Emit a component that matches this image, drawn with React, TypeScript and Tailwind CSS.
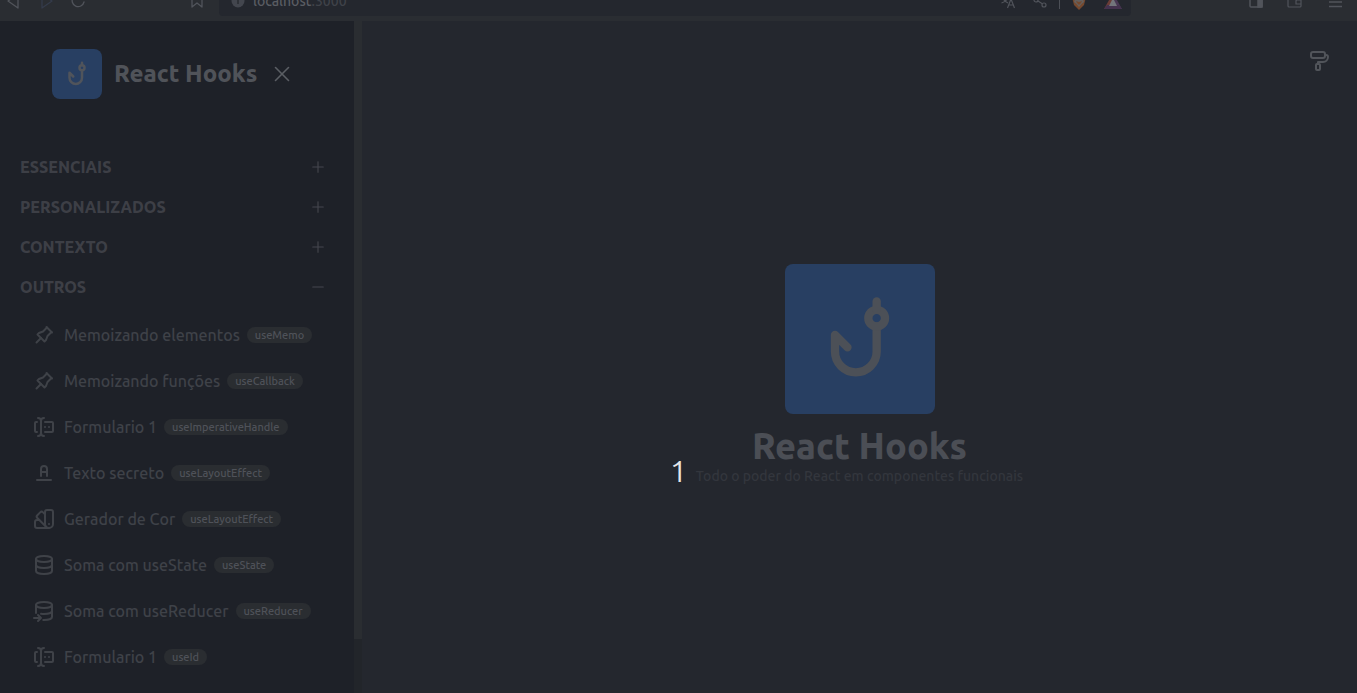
import type { ComponentType, ReactNode } from "react";
import {
  TbPin,
  TbForms,
  TbTextColor,
  TbColorSwatch,
  TbDatabase,
  TbPaint,
  TbFishHook,
} from "react-icons/tb";
import { X, Plus, Minus } from "lucide-react";

function DatabaseArrow({ size = 24 }: { size?: number | string }) {
  return (
    <svg
      width={size}
      height={size}
      viewBox="0 0 24 24"
      fill="none"
      stroke="currentColor"
      strokeWidth="2"
      strokeLinecap="round"
      strokeLinejoin="round"
    >
      <ellipse cx="12" cy="6" rx="8" ry="3" />
      <path d="M4 6v8m5.009.783c.924.14 1.933.217 2.991.217 4.418 0 8-1.343 8-3V6" />
      <path d="M11.252 20.987c.246.009.496.013.748.013 4.418 0 8-1.343 8-3v-6M2 19h7M6 16l3 3-3 3" />
    </svg>
  );
}

type Item = { label: string; tag: string; icon: ComponentType<{ size?: number | string }> };

const items: Item[] = [
  { label: "Memoizando elementos", tag: "useMemo", icon: TbPin },
  { label: "Memoizando funções", tag: "useCallback", icon: TbPin },
  { label: "Formulario 1", tag: "useImperativeHandle", icon: TbForms },
  { label: "Texto secreto", tag: "useLayoutEffect", icon: TbTextColor },
  { label: "Gerador de Cor", tag: "useLayoutEffect", icon: TbColorSwatch },
  { label: "Soma com useState", tag: "useState", icon: TbDatabase },
  { label: "Soma com useReducer", tag: "useReducer", icon: DatabaseArrow },
  { label: "Formulario 1", tag: "useId", icon: TbForms },
];

const closedSections = ["Essenciais", "Personalizados", "Contexto"];

function BarButton({ label, children }: { label: string; children: ReactNode }) {
  return (
    <button type="button" aria-label={label} className="flex size-5 items-center justify-center">
      {children}
    </button>
  );
}

function BrowserBar() {
  return (
    <header className="flex h-[21px] shrink-0 flex-col justify-end overflow-hidden bg-[#2a2d32] text-[#51545b]">
      <div className="flex h-10 shrink-0 items-center">
        <div className="flex w-[219px] shrink-0 items-center gap-3 pr-3 pl-1">
          <BarButton label="Voltar">
            <svg width="20" height="20" viewBox="0 0 20 20" fill="none" stroke="currentColor" strokeWidth="1.3" strokeLinejoin="round">
              <path d="M14 3v14L4 10z" />
            </svg>
          </BarButton>
          <BarButton label="Avançar">
            <svg width="20" height="20" viewBox="0 0 20 20" fill="none" stroke="#343b4b" strokeWidth="1.3" strokeLinejoin="round">
              <path d="M6 3v14l10-7z" />
            </svg>
          </BarButton>
          <BarButton label="Recarregar">
            <svg width="20" height="20" viewBox="0 0 20 20" fill="none" stroke="currentColor" strokeWidth="1.3" strokeLinecap="round">
              <path d="M14.5 5.5A6 6 0 1 0 16 11M16 2v5h-5" />
            </svg>
          </BarButton>
          <div className="flex-1" />
          <BarButton label="Favoritos">
            <svg width="20" height="20" viewBox="0 0 20 20" fill="none" stroke="currentColor" strokeWidth="1.3" strokeLinejoin="round">
              <path d="M5 3h10v13l-5-4-5 4z" />
            </svg>
          </BarButton>
        </div>
        <div className="flex h-[30px] min-w-0 flex-1 items-center rounded bg-[#24272e] pr-2 pl-3">
          <svg width="14" height="14" viewBox="0 0 14 14" className="mr-2 shrink-0">
            <circle cx="7" cy="7" r="6.5" fill="#43464e" />
            <path d="M7 6v4M7 3.5v1" stroke="#2a2d32" strokeWidth="1.5" />
          </svg>
          <span className="text-sm text-[#5a5d63]">
            localhost<span className="text-[#3f4249]">:3000</span>
          </span>
          <div className="flex-1" />
          <div className="flex items-center gap-3">
            <BarButton label="Traduzir">
              <svg width="20" height="20" viewBox="0 0 20 20" fill="none" stroke="currentColor" strokeWidth="1.2">
                <path d="M3 5h9M7.500 3v2M10.500 5c-1 4-4 6-7 7M5 7c1 3 3 4 5 5M9.500 17l3.500-9 3.500 9M10.800 14h4.400" />
              </svg>
            </BarButton>
            <BarButton label="Compartilhar">
              <svg width="20" height="20" viewBox="0 0 20 20" fill="none" stroke="currentColor" strokeWidth="1.2">
                <circle cx="6" cy="9" r="2" />
                <circle cx="14" cy="14" r="2" />
                <circle cx="14" cy="4" r="2" />
                <path d="M8 10l4.300 2.800M8 8l4.300-2.800" />
              </svg>
            </BarButton>
          </div>
          <div className="mx-[9px] h-4 w-px bg-[#4c4f56]" />
          <div className="flex items-center gap-[14px]">
            <BarButton label="Brave Shields">
              <svg width="16" height="20" viewBox="0 0 16 20">
                <path d="M3 2h10l2 4-2 8-5 5-5-5L1 6z" fill="#76492e" />
                <path d="M4 8h8l1 3-2.500 2L8 16l-2.500-3L3 11z" fill="#65605e" />
                <path d="M5 10l3 1 3-1-1 2-2 2-2-2z" fill="#76492e" />
              </svg>
            </BarButton>
            <BarButton label="Brave Rewards">
              <svg width="20" height="18" viewBox="0 0 20 18">
                <path d="M10 1L1 17h9z" fill="#6b3c36" />
                <path d="M10 1l9 16h-9z" fill="#493854" />
                <path d="M1 17l3-4h12l3 4z" fill="#44324e" />
                <path d="M10 6l-4 8h8z" fill="#73757b" />
              </svg>
            </BarButton>
          </div>
        </div>
        <div className="flex w-[226px] shrink-0 items-center justify-end gap-5 pr-[11px]">
          <BarButton label="Barra lateral">
            <svg width="20" height="20" viewBox="0 0 20 20" fill="none" stroke="currentColor" strokeWidth="1.5">
              <rect x="4" y="4" width="12" height="12" rx="1" />
              <path d="M12 4h4v12h-4z" fill="currentColor" />
            </svg>
          </BarButton>
          <BarButton label="Carteira">
            <svg width="20" height="20" viewBox="0 0 20 20" fill="none" stroke="currentColor" strokeWidth="1.2">
              <path d="M12 6V4H3a1 1 0 0 0-1 1v10a1 1 0 0 0 1 1h11a1 1 0 0 0 1-1V6H2" />
              <path d="M15 9h-4a1 1 0 0 0-1 1v3h5" />
            </svg>
          </BarButton>
          <BarButton label="Menu">
            <svg width="20" height="20" viewBox="0 0 20 20" fill="none" stroke="currentColor" strokeWidth="1.3">
              <path d="M3 6.500h13M3 11h13M3 15.500h13" />
            </svg>
          </BarButton>
        </div>
      </div>
    </header>
  );
}

function SectionButton({ title, open }: { title: string; open: boolean }) {
  const Sign = open ? Minus : Plus;
  return (
    <button
      type="button"
      aria-expanded={open}
      className="flex h-10 w-full items-center justify-between pr-[27px] pl-5 text-base font-extrabold text-[#3d3f46] uppercase"
    >
      {title}
      <Sign size={18} strokeWidth={1.5} className="text-[#45474e]" />
    </button>
  );
}

function Sidebar() {
  return (
    <aside className="flex w-[362px] shrink-0 overflow-hidden bg-[#1e2128]">
      <div className="min-w-0 flex-1">
        <div className="flex items-center pt-7 pl-13">
          <div className="flex size-[50px] shrink-0 items-center justify-center rounded-lg bg-[#283f62] text-[#50545b]">
            <TbFishHook size={30} />
          </div>
          <h2 className="ml-3 text-2xl font-extrabold whitespace-nowrap text-[#505359]">React Hooks</h2>
          <button type="button" aria-label="Fechar menu" className="ml-3 text-[#5b5e64]">
            <X size={26} strokeWidth={1.5} />
          </button>
        </div>
        <nav className="mt-12">
          {closedSections.map((title) => (
            <SectionButton key={title} title={title} open={false} />
          ))}
          <SectionButton title="Outros" open />
          <ul className="pt-[5px]">
            {items.map(({ label, tag, icon: Icon }) => (
              <li key={label + tag}>
                <a href="#" className="flex h-[46px] items-center pl-8 text-base whitespace-nowrap text-[#3f4248]">
                  <Icon size={24} />
                  <span className="ml-2">{label}</span>
                  <span className="ml-[7px] flex h-4 items-center rounded-full bg-[#2a2d31] px-2 text-[11px] text-[#4f5259]">
                    {tag}
                  </span>
                </a>
              </li>
            ))}
          </ul>
        </nav>
      </div>
      <div className="w-2 bg-[#22252a]">
        <div className="h-[92%] bg-[#2a2d31]" />
      </div>
    </aside>
  );
}

export default function App() {
  return (
    <div className="relative flex h-screen flex-col overflow-hidden bg-[#24272e] font-['Ubuntu','Noto_Sans',sans-serif] font-medium">
      <BrowserBar />
      <div className="flex min-h-0 flex-1">
        <Sidebar />
        <main className="flex min-w-0 flex-1 flex-col">
          <div className="flex justify-end pt-7 pr-[27px]">
            <button type="button" aria-label="Mudar tema" className="text-[#51545a]">
              <TbPaint size={24} />
            </button>
          </div>
          <div className="flex flex-1 flex-col items-center justify-center pb-[17px]">
            <div className="flex size-[150px] items-center justify-center rounded-lg bg-[#283f62] text-[#4c5057]">
              <TbFishHook size={100} />
            </div>
            <h1 className="mt-3 text-4xl font-extrabold text-[#4b4e55]">React Hooks</h1>
            <p className="text-sm text-[#33363d]">Todo o poder do React em componentes funcionais</p>
          </div>
        </main>
      </div>
      <div className="absolute top-[453px] left-1/2 -translate-x-1/2 text-3xl font-normal text-[#e4e5e7]">1</div>
    </div>
  );
}
